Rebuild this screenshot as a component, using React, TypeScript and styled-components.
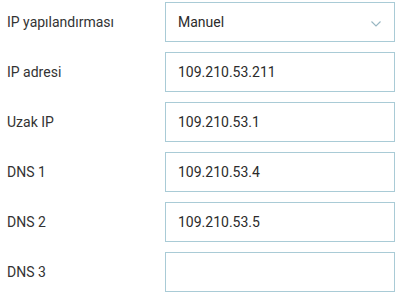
import { Fragment } from "react";
import styled, { createGlobalStyle } from "styled-components";

const GlobalStyle = createGlobalStyle`
  body {
    margin: 0;
    background: #fff;
    font-family: Roboto, "Liberation Sans", sans-serif;
  }
`;

const Form = styled.div`
  display: grid;
  grid-template-columns: 158px 230px;
  row-gap: 10px;
  padding: 2px 0 0 7px;
`;

const Label = styled.div`
  display: flex;
  align-items: center;
  height: 40px;
  font-size: 14px;
  color: #333;
`;

const Field = styled.div`
  box-sizing: border-box;
  display: flex;
  align-items: center;
  justify-content: space-between;
  height: 40px;
  padding: 0 13px 0 12px;
  border: 1px solid #a9cbd6;
  font-size: 14px;
  color: #2b2b2b;
  background: #fff;
`;

const ChevronIcon = styled.svg`
  margin-top: 3px;
`;

const Chevron = () => (
  <ChevronIcon width="10" height="6" viewBox="0 0 10 6" fill="none">
    <path d="M0.5 0.5l4.5 4.5L9.5 0.5" stroke="#97b6c2" strokeWidth="1.1" />
  </ChevronIcon>
);

const rows = [
  { label: "IP yapılandırması", value: "Manuel", select: true },
  { label: "IP adresi", value: "109.210.53.211" },
  { label: "Uzak IP", value: "109.210.53.1" },
  { label: "DNS 1", value: "109.210.53.4" },
  { label: "DNS 2", value: "109.210.53.5" },
  { label: "DNS 3", value: "" },
];

export default function App() {
  return (
    <>
      <GlobalStyle />
      <Form>
        {rows.map((r) => (
          <Fragment key={r.label}>
            <Label>{r.label}</Label>
            <Field>
              <span>{r.value}</span>
              {r.select && <Chevron />}
            </Field>
          </Fragment>
        ))}
      </Form>
    </>
  );
}
